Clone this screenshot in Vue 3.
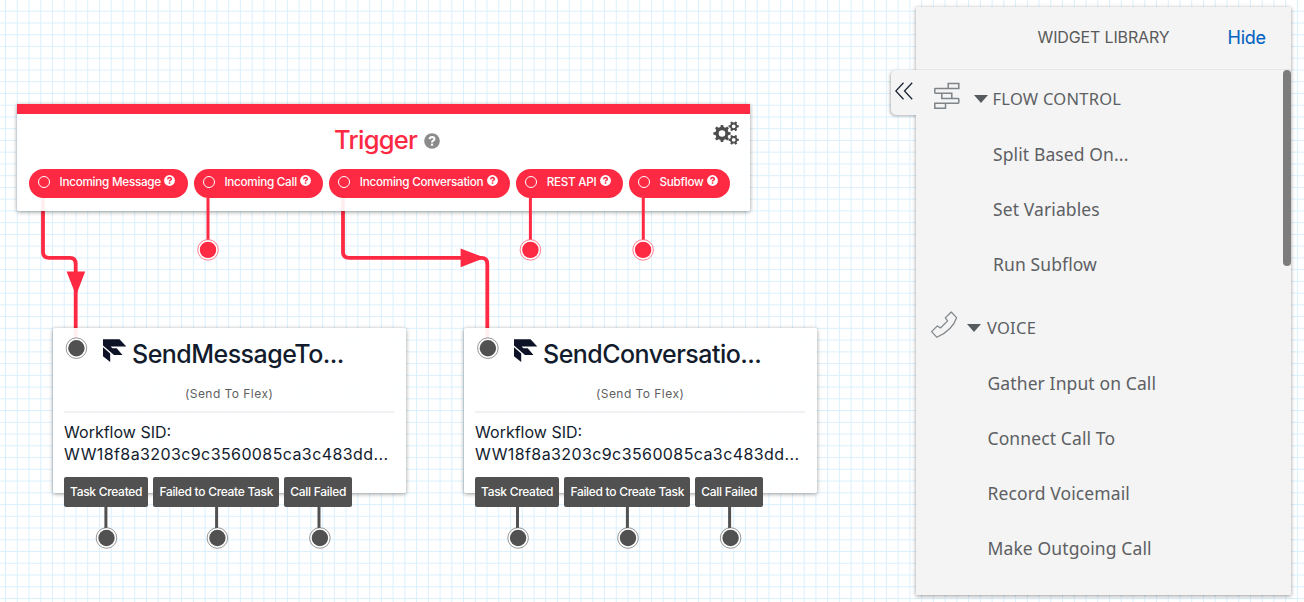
<script setup>
const pitch = 11.745
const cols = Array.from({ length: 112 }, (_, i) => 5.5 + i * pitch)
const rows = Array.from({ length: 52 }, (_, i) => -0.5 + i * pitch)

const RED = '#fe2a43'
const GRAY = '#515151'

const triggers = [
  { label: 'Incoming Message', w: 159 },
  { label: 'Incoming Call', w: 129.5 },
  { label: 'Incoming Conversation', w: 181 },
  { label: 'REST API', w: 107 },
  { label: 'Subflow', w: 101 },
]

const widgets = [
  { id: 'a', title: 'SendMessageTo...' },
  { id: 'b', title: 'SendConversatio...' },
]
const outputs = [
  { label: 'Task Created', w: 84 },
  { label: 'Failed to Create Task', w: 126 },
  { label: 'Call Failed', w: 67.5 },
]

// Stubs that lead from an output to an unconnected end point
const stubs = [
  { x: 208, lx: 208, y1: 198, y: 249.9, c: RED },
  { x: 530.4, lx: 530.4, y1: 198, y: 249.9, c: RED },
  { x: 643.1, lx: 643.3, y1: 198, y: 249.9, c: RED },
  { x: 106.5, lx: 105.9, y1: 507, y: 538, c: GRAY },
  { x: 217.4, lx: 216.6, y1: 507, y: 538, c: GRAY },
  { x: 319.9, lx: 319, y1: 507, y: 538, c: GRAY },
  { x: 518.1, lx: 517.5, y1: 507, y: 538, c: GRAY },
  { x: 628, lx: 627.4, y1: 507, y: 538, c: GRAY },
  { x: 730.6, lx: 729.6, y1: 507, y: 538, c: GRAY },
]
const inlets = [
  { x: 76.4, y: 348.2, c: GRAY },
  { x: 487.9, y: 348.2, c: GRAY },
]

const sections = [
  { name: 'FLOW CONTROL', icon: 'flow', items: ['Split Based On...', 'Set Variables', 'Run Subflow'] },
  { name: 'VOICE', icon: 'voice', items: ['Gather Input on Call', 'Connect Call To', 'Record Voicemail', 'Make Outgoing Call'] },
]

function gear(cx, cy, outer, inner, hole, teeth) {
  const pts = []
  const step = (Math.PI * 2) / teeth
  for (let i = 0; i < teeth; i++) {
    const a = i * step
    for (const [r, d] of [[inner, -0.3], [outer, -0.18], [outer, 0.18], [inner, 0.3]]) {
      pts.push(`${(cx + r * Math.cos(a + d * step)).toFixed(2)} ${(cy + r * Math.sin(a + d * step)).toFixed(2)}`)
    }
  }
  return `M${pts.join('L')}ZM${cx - hole} ${cy}a${hole} ${hole} 0 1 0 ${hole * 2} 0a${hole} ${hole} 0 1 0 ${-hole * 2} 0Z`
}
const gears = [gear(9, 12.5, 8.7, 6.7, 3.3, 8), gear(20.7, 5.3, 5.2, 3.8, 1.9, 6), gear(20.7, 18.8, 5.2, 3.8, 1.9, 6)]
</script>

<template>
  <main class="studio">
    <svg class="layer" width="1304" height="602">
      <g stroke="#dbf0fd" stroke-width="1">
        <line v-for="x in cols" :key="'c' + x" :x1="x" :x2="x" y1="0" y2="602" />
        <line v-for="y in rows" :key="'r' + y" :y1="y" :y2="y" x1="0" x2="1304" />
      </g>
      <g fill="none" :stroke="RED" stroke-width="3.8">
        <path d="M43 198V252Q43 257.8 49 257.8H70Q75.7 257.8 75.7 264V345" />
        <path d="M343 198V252Q343 257.8 349 257.8H481.500Q487.300 257.8 487.300 264V345" />
      </g>
      <path :fill="RED" d="M66.600 271.600H85.200L76 295.500ZM460.600 248.500V267.200L485 257.8Z" />
    </svg>

    <section class="node trigger">
      <header class="trigger-head">
        <h1>Trigger</h1>
        <svg class="help" width="16" height="16" viewBox="0 0 16 16">
          <circle cx="8" cy="8" r="7.8" fill="#8b8b8b" />
          <path d="M5.600 6.200Q5.900 4 8.100 4Q10.500 4.100 10.400 6.100Q10.300 7.200 8.900 7.900Q8 8.400 8 9.400" fill="none" stroke="#fff" stroke-width="2.100" />
          <rect x="6.900" y="10.600" width="2.200" height="2.100" fill="#fff" />
        </svg>
        <svg class="gears" width="27" height="25" viewBox="0 0 27 25">
          <path v-for="g in gears" :key="g" :d="g" fill="#4d4d4d" fill-rule="evenodd" />
        </svg>
      </header>
      <div class="pills">
        <div v-for="t in triggers" :key="t.label" class="pill" :style="{ width: t.w + 'px' }">
          <i class="dot"></i>
          <span>{{ t.label }}</span>
          <svg width="11" height="11" viewBox="0 0 16 16">
            <circle cx="8" cy="8" r="7.900" fill="#fff" />
            <path d="M5.300 6.200Q5.700 3.800 8.100 3.800Q10.700 3.900 10.600 6.100Q10.500 7.200 9 7.900Q8 8.400 8 9.600" fill="none" :stroke="RED" stroke-width="2.200" />
            <rect x="6.900" y="10.600" width="2.300" height="2.200" :fill="RED" />
          </svg>
        </div>
      </div>
    </section>

    <section v-for="w in widgets" :key="w.id" class="node widget" :class="w.id">
      <header>
        <svg width="24" height="24" viewBox="0 0 24 24" fill="#0d1226">
          <path d="M0 0.300H16.500L23.300 7.600H7.500L9.500 9.300H13.700L19.500 16H11L0 6.600Z" />
          <path d="M0 8.300L7.200 14.600V23L0 17.300Z" />
        </svg>
        <h2>{{ w.title }}</h2>
      </header>
      <p class="kind">(Send To Flex)</p>
      <p class="info">Workflow SID:<br /><span>WW18f8a3203c9c3560085ca3c483dd...</span></p>
      <footer>
        <b v-for="o in outputs" :key="o.label" :style="{ width: o.w + 'px' }">{{ o.label }}</b>
      </footer>
    </section>

    <svg class="layer" width="1304" height="602">
      <line v-for="s in stubs" :key="s.lx" :x1="s.lx" :x2="s.lx" :y1="s.y1" :y2="s.y - 8" :stroke="s.c" stroke-width="3" />
      <g v-for="s in [...stubs, ...inlets]" :key="'p' + s.x">
        <circle :cx="s.x" :cy="s.y" r="10.300" fill="#fff" :stroke="s.c" stroke-width=".6" />
        <circle :cx="s.x" :cy="s.y" r="8.200" :fill="s.c" />
      </g>
    </svg>

    <aside class="library">
      <div class="collapse">
        <svg width="18" height="18" viewBox="0 0 18 18" fill="none" stroke="#1b2433" stroke-width="1.300">
          <path d="M8.500 .7L.8 9L8.500 17.300M17.200 .7L9.500 9L17.200 17.300" />
        </svg>
      </div>
      <header>
        <h3>WIDGET LIBRARY</h3>
        <a>Hide</a>
      </header>
      <div class="scrollbar"></div>
      <section v-for="s in sections" :key="s.name" :class="s.icon">
        <div class="group">
          <svg v-if="s.icon === 'flow'" width="27" height="28" viewBox="0 0 27 28" fill="none" stroke="#7f8488" stroke-width="1.500">
            <path d="M14.200 6.400V1.500H24.800V6.400H1.500Q.8 6.400 .8 7.100V10.600Q.8 11.300 1.500 11.300H17.800V16.400M7.800 11.300V16.400H24.100Q24.800 16.400 24.800 17.100V20.600Q24.800 21.300 24.100 21.300H.8V26.300H11.500V21.300" />
          </svg>
          <svg v-else width="27" height="28" viewBox="0 0 27 28" fill="none" stroke="#7f8488" stroke-width="1.200" stroke-linejoin="round">
            <path d="M20.200 1L25.600 6.700Q21.600 19 5.900 26.300L.6 20.700L6.400 14.900L9.500 17L16.600 9.900L14.300 6.900Z" />
          </svg>
          <i class="caret"></i>
          <h4>{{ s.name }}</h4>
        </div>
        <p v-for="item in s.items" :key="item">{{ item }}</p>
      </section>
    </aside>
  </main>
</template>

<style scoped>
.studio {
  position: relative;
  width: 1304px;
  height: 602px;
  overflow: hidden;
  background: #fff;
  font-family: Inter, "Liberation Sans", sans-serif;
}
h1, h2, h3, h4, p { margin: 0; font-weight: 400; }
.layer { position: absolute; left: 0; top: 0; }
.node {
  position: absolute;
  box-sizing: border-box;
  background: rgba(255, 255, 255, .92);
  box-shadow: 0 1px 4px rgba(0, 0, 0, .4);
  border-radius: 2px;
}
.trigger { left: 17px; top: 104px; width: 733px; height: 107px; border-top: 10px solid #fe2a43; border-radius: 0 0 2px 2px; }
.trigger-head { position: relative; display: flex; align-items: center; height: 55px; padding-left: 317px; }
.trigger-head h1 { margin-top: -4px; color: #fe2a43; font-size: 25.500px; font-weight: 500; line-height: 30px; letter-spacing: -.72px; }
.help { margin: -1px 0 0 6.500px; }
.gears { position: absolute; right: 10px; top: 7px; }
.pills { display: flex; gap: 5.900px; padding-left: 12px; }
.pill {
  box-sizing: border-box;
  flex: none;
  display: flex;
  align-items: center;
  height: 29px;
  padding: 0 0 4px 9px;
  border-radius: 15px;
  background: #fe2a43;
  color: #fff;
  font-size: 11.700px;
  font-weight: 500;
  letter-spacing: -.26px;
  white-space: nowrap;
}
.pill span { position: relative; top: .6px; }
.dot { box-sizing: border-box; width: 12px; height: 12px; margin-right: 9.500px; border: 1px solid #fff; border-radius: 50%; }
.pill svg { margin: -2px 0 0 3.400px; }
.widget { top: 328px; width: 353px; height: 165px; padding: 11px 11.500px 0; color: #121c2d; }
.widget.a { left: 52.600px; }
.widget.b { left: 463.600px; }
.widget header { display: flex; height: 44px; padding-left: 38.500px; gap: 5.500px; }
.widget h2 { font-size: 25px; font-weight: 500; line-height: 31px; letter-spacing: -.54px; white-space: nowrap; }
.kind { height: 28px; border-bottom: 2px solid #f1f1f3; color: #606060; font-size: 12px; line-height: 22px; letter-spacing: .46px; text-align: center; }
.info { height: 63.500px; padding-top: 7.500px; box-sizing: border-box; font-size: 16px; line-height: 22px; white-space: nowrap; }
.info span { letter-spacing: .4px; }
.widget footer { display: flex; gap: 5.200px; }
.widget b {
  box-sizing: border-box;
  flex: none;
  height: 30.500px;
  border-radius: 2px;
  background: #515151;
  color: #fff;
  font-size: 12px;
  font-weight: 500;
  line-height: 30px;
  letter-spacing: -.3px;
  text-align: center;
  white-space: nowrap;
}
.library {
  position: absolute;
  left: 916px;
  top: 7px;
  width: 375px;
  height: 588px;
  background: #f4f4f4;
  box-shadow: 0 1px 4px rgba(0, 0, 0, .4);
  color: #5d6063;
}
.library header { position: relative; box-sizing: border-box; display: flex; height: 63px; padding-left: 121.500px; border-bottom: 1px solid #e6e6e6; line-height: 60px; }
.library h3 { width: 190px; font-size: 16px; letter-spacing: -.14px; color: #5a5a5a; white-space: nowrap; }
.library a { font-size: 18px; color: #0263c0; line-height: 62px; letter-spacing: -.25px; -webkit-text-stroke: .1px #0263c0; }
.collapse {
  position: absolute;
  left: -25px;
  top: 63px;
  box-sizing: border-box;
  width: 26px;
  height: 45px;
  padding: 12px 0 0 3.500px;
  border-radius: 5px 0 0 5px;
  background: #f4f4f4;
  box-shadow: -1px 1px 3px rgba(0, 0, 0, .3);
  clip-path: inset(-5px 1px -6px -6px);
}
.scrollbar { position: absolute; right: 0; top: 63px; width: 8px; height: 196px; border-radius: 4px; background: #7c7c7c; }
.library section { font-family: "Noto Sans", sans-serif; }
.group { display: flex; align-items: center; height: 57px; }
.flow .group { padding-left: 17.500px; }
.flow p { padding-left: 77px; }
.voice { padding-top: 7px; }
.voice .group { padding-left: 15px; }
.voice p { padding-left: 71.500px; }
.group svg { margin-top: -5px; }
.caret { margin: 0 5px 0 13px; border: 7.500px solid transparent; border-top: 8.500px solid #565b5f; border-bottom: 0; }
.voice .caret { margin-left: 9px; margin-right: 6px; }
.library h4 { font-size: 16.500px; letter-spacing: .25px; }
.library p { height: 55px; line-height: 55px; font-size: 17.500px; letter-spacing: .11px; white-space: nowrap; }
</style>
